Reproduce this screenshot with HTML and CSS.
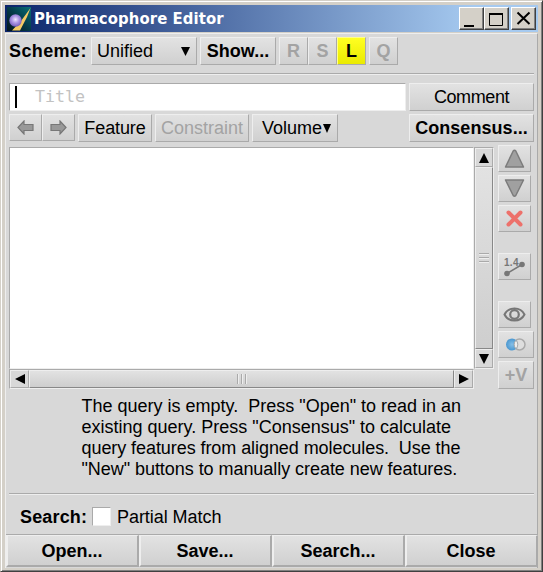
FILE: index.html
```html
<!DOCTYPE html>
<html lang="en">
<head>
<meta charset="utf-8">
<title>Pharmacophore Editor</title>
<link rel="stylesheet" href="styles.css">
</head>
<body>
<div class="window">
  <header class="titlebar">
    <svg class="logo" width="24" height="24" viewBox="0 0 24 24">
      <defs>
        <linearGradient id="tile" x1="0" y1="1" x2="1" y2="0"><stop offset="0" stop-color="#04141c"/><stop offset=".5" stop-color="#053a48"/><stop offset="1" stop-color="#087078"/></linearGradient>
        <radialGradient id="ball" cx=".5" cy=".42" r=".6"><stop offset="0" stop-color="#f0e8ff"/><stop offset=".45" stop-color="#b09ae6"/><stop offset="1" stop-color="#7058b8"/></radialGradient>
      </defs>
      <rect width="24" height="24" fill="url(#tile)"/>
      <path d="M23.500 1 20 10 13 23.500H5L14 14Z" fill="#f5ca65"/>
      <circle cx="8.500" cy="13.500" r="6.200" fill="url(#ball)"/>
    </svg>
    <h1 class="title">Pharmacophore Editor</h1>
    <div class="controls">
      <button class="control" aria-label="Minimize"><svg width="23" height="21"><path d="M4 17h10v2H4z"/></svg></button>
      <button class="control maximize" aria-label="Maximize"><svg width="23" height="21"><path d="M4.500 5.500h13v12h-13z" fill="none" stroke="#000"/><path d="M4 5h14v2H4z"/></svg></button>
      <button class="control" aria-label="Close window"><svg width="23" height="21"><path d="m5.500 4.500 12 11.500m0-11.500-12 11.500" stroke="#000" stroke-width="2"/></svg></button>
    </div>
  </header>
  <main class="client">
    <div class="scheme-row">
      <span class="label scheme-label">Scheme:</span>
      <button class="button select"><span>Unified</span><svg width="9" height="9"><path d="M0 0h9L4.500 9z"/></svg></button>
      <button class="button bold show">Show...</button>
      <div class="toggles"><button class="button bold muted">R</button><button class="button bold muted">S</button><button class="button bold active">L</button></div>
      <button class="button bold muted square">Q</button>
    </div>
    <hr class="rule top-rule">
    <div class="query-row title-row">
      <div class="title-input"><i class="caret"></i><span>Title</span></div>
      <button class="button wide comment">Comment</button>
    </div>
    <div class="query-row tool-row">
      <button class="button arrow" aria-label="Back"><svg width="17" height="15" viewBox="0 0 17 15"><path d="m1 7.500 6-6.500v3.500h9v6H7V14Z"/></svg></button>
      <button class="button arrow" aria-label="Forward"><svg width="17" height="15" viewBox="0 0 17 15"><path d="M16 7.500 10 1v3.500H1v6h9V14Z"/></svg></button>
      <button class="button feature">Feature</button>
      <button class="button muted constraint">Constraint</button>
      <button class="button volume"><span>Volume</span><svg width="8" height="9"><path d="M0 0h8L4 9z"/></svg></button>
      <button class="button bold wide consensus">Consensus...</button>
    </div>
    <section class="workspace">
      <div class="list-grid">
        <div class="list"></div>
        <div class="vbar"><button class="cap" aria-label="Scroll up"><svg width="10" height="10"><path d="m5 0 5 10H0z"/></svg></button><div class="thumb"><i class="grip"></i></div><button class="cap" aria-label="Scroll down"><svg width="10" height="10"><path d="M0 0h10L5 10z"/></svg></button></div>
        <div class="hbar"><button class="cap" aria-label="Scroll left"><svg width="10" height="10"><path d="M10 0v10L0 5z"/></svg></button><div class="thumb"><i class="grip"></i></div><button class="cap" aria-label="Scroll right"><svg width="10" height="10"><path d="m0 0 10 5-10 5z"/></svg></button></div>
      </div>
      <div class="side">
        <button class="button" aria-label="Move up"><svg width="31" height="25"><path d="M14.200 5q1.300-1.500 2.600 0L24.500 21H6.500Z" fill="#a0a0a0" stroke="#7c7c7c" stroke-width="1.500" stroke-linejoin="round"/></svg></button>
        <button class="button" aria-label="Move down"><svg width="31" height="25"><path d="M6.500 4h18l-7.700 15.500q-1.300 1.500-2.600 0Z" fill="#a0a0a0" stroke="#7c7c7c" stroke-width="1.500" stroke-linejoin="round"/></svg></button>
        <button class="button" aria-label="Delete"><svg width="31" height="25"><path d="m9.500 6.500 12 12m0-12-12 12" stroke="#ed716b" stroke-width="4" stroke-linecap="round"/></svg></button>
        <button class="button gap-before" aria-label="Measure distance"><svg width="31" height="25"><text class="measure" x="5" y="12">1.4</text><path d="m8 19.500 15-9" stroke="#777" stroke-width="1.500"/><circle cx="8" cy="19.500" r="2.800" fill="#777"/><circle cx="23" cy="10.500" r="2.800" fill="#777"/></svg></button>
        <button class="button gap-before" aria-label="Show features"><svg width="31" height="25" fill="none" stroke="#777"><path d="M5.500 12.500c4-8 16-8 20 0-4 8-16 8-20 0Z" stroke-width="2"/><circle cx="15.500" cy="12.500" r="4.300" stroke-width="2.200"/></svg></button>
        <button class="button larger" aria-label="Toggle overlap"><svg width="34" height="25"><defs><radialGradient id="blue"><stop stop-color="#86bfe7"/><stop offset="1" stop-color="#4a97d0"/></radialGradient></defs><circle cx="20.500" cy="12.500" r="5.500" fill="#dedede" stroke="#aaa" stroke-width="1.500"/><circle cx="13" cy="12.500" r="6" fill="url(#blue)"/><path d="M17 8.200a6 6 0 0 1 0 8.600 6 6 0 0 1 0-8.600Z" fill="#eee" stroke="#aaa"/></svg></button>
        <button class="button bold muted larger volume-add">+V</button>
      </div>
    </section>
    <p class="message"><span>The query is empty.&nbsp; Press "Open" to read in an</span><br><span>existing query. Press "Consensus" to calculate</span><br><span class="tight">query features from aligned molecules.&nbsp; Use the</span><br><span class="snug">"New" buttons to manually create new features.</span></p>
    <hr class="rule">
    <div class="search-row"><span class="label search-label">Search:</span><i class="checkbox"></i><span class="partial">Partial Match</span></div>
    <footer class="actions"><button>Open...</button><button>Save...</button><button>Search...</button><button>Close</button></footer>
  </main>
</div>
</body>
</html>
```
FILE: styles.css
```css
* { box-sizing: border-box; }
body { margin: 0; width: 543px; height: 572px; overflow: hidden; font: 18px/20px "Liberation Sans", Arial, sans-serif; color: #000; background: #d4d0c8; }
button { margin: 0; padding: 0; font: inherit; color: inherit; white-space: nowrap; }
svg { display: block; flex: none; }
.window { width: 543px; height: 572px; border: 1px solid #d4d0c8; border-right-color: #404040; border-bottom-color: #404040; box-shadow: inset 1px 1px #fff, inset -1px -1px #808080; padding: 4px; }
.titlebar { display: flex; align-items: center; width: 533px; height: 27px; padding: 0 2px; background: linear-gradient(90deg, #0a246a, #a6caf0 88%); }
.title { margin: 0 0 0 3px; color: #fff; font: bold 16.500px/20px "DejaVu Sans Condensed", "DejaVu Sans", sans-serif; letter-spacing: .1px; white-space: nowrap; }
.controls { display: flex; margin-left: auto; }
.control { width: 25px; height: 23px; border: 1px solid #fff; border-right-color: #404040; border-bottom-color: #404040; background: #d4d0c8; box-shadow: inset -1px -1px #808080; }
.maximize { margin-right: 2px; }
.client { width: 533px; height: 535px; margin-top: 1px; border: 1px solid #eee; border-right-color: #aaa; border-bottom: 0; background: #d8d8d8; }
.button { display: flex; flex: none; align-items: center; justify-content: center; height: 28px; border: 1px solid #eee; border-right-color: #aaa; border-bottom-color: #aaa; background: linear-gradient(#e2e2e2, #d0d0d0); }
.bold, .label { font-weight: bold; }
.muted { color: #a3a3a3; }
.scheme-row { display: flex; height: 39px; padding: 3px 3px 0; }
.scheme-label { width: 82px; padding-top: 4px; letter-spacing: .4px; }
.select { width: 106px; justify-content: space-between; padding: 0 6px 0 5px; margin-right: 3px; }
.show { width: 76px; margin-right: 3px; }
.toggles { display: flex; margin-right: 3px; }
.toggles .button, .square { width: 29px; }
.active { background: linear-gradient(#ffff22, #eaea00); border-color: #ffff88 #aaa #aaa #ffff88; }
.rule { height: 2px; margin: 0 3px; border: 0; border-top: 1px solid #aaa; border-bottom: 1px solid #eee; }
.query-row { display: flex; margin: 8px 3px 0; }
.title-input { display: flex; align-items: center; width: 397px; height: 28px; margin-right: 3px; border: 1px solid #aaa; border-right-color: #eee; border-bottom-color: #eee; background: #fff; color: #c2c2c2; font: 16.600px/20px "DejaVu Sans Mono", monospace; }
.caret { width: 2px; height: 22px; margin: 0 18px 0 5px; background: #000; }
.wide { width: 125px; }
.comment { letter-spacing: -.4px; }
.tool-row { margin-top: 3px; }
.arrow { width: 33px; height: 27px; }
.arrow path { fill: #999; stroke: #777; stroke-width: 1.2; }
.feature { width: 74px; margin: 0 3px; letter-spacing: -.1px; }
.constraint { width: 94px; margin-right: 3px; }
.volume { width: 86px; gap: 1px; padding-left: 3px; }
.volume svg { margin-top: 1px; }
.consensus { margin-left: auto; letter-spacing: .05px; }
.workspace { display: flex; height: 246px; margin-left: 3px; padding-top: 3px; }
.list-grid { display: grid; grid-template: 222px 20px / 465px 20px; width: 485px; height: 242px; margin-top: 2px; }
.list { border: 1px solid #aaa; border-right-color: #eee; border-bottom-color: #eee; background: #fff; }
.vbar, .hbar { display: flex; border: 1px solid #aaa; border-right-color: #eee; border-bottom-color: #eee; }
.vbar { flex-direction: column; }
.hbar { width: 465px; }
.cap { display: flex; flex: none; align-items: center; justify-content: center; width: 19px; height: 18px; border: 1px solid #eee; border-right-color: #aaa; border-bottom-color: #aaa; background: #d8d8d8; }
.vbar .cap { width: 18px; height: 19px; }
.thumb { display: flex; flex: 1; align-items: center; justify-content: center; border: 1px solid #eee; border-right-color: #888; border-bottom-color: #888; background: linear-gradient(#e2e2e2, #cecece); }
.grip { width: 10px; height: 10px; background: repeating-linear-gradient(90deg, #aaa 0 1px, #eee 1px 2px, transparent 2px 4px); }
.vbar .grip { background: repeating-linear-gradient(#aaa 0 1px, #eee 1px 2px, transparent 2px 4px); }
.side { display: flex; flex-direction: column; gap: 3px; margin-left: 4px; }
.side .button { width: 33px; height: 27px; }
.side .gap-before { margin-top: 18px; }
.side .larger { width: 36px; }
.side .volume-add { height: 28px; }
.measure { font: bold 10px "Liberation Sans", sans-serif; letter-spacing: .3px; fill: #777; }
.message { width: 430px; height: 84px; margin: 8px 0 13px 75.500px; line-height: 21px; white-space: nowrap; }
.tight { letter-spacing: -.07px; }
.snug { letter-spacing: -.05px; }
.search-row { display: flex; height: 39px; padding: 12px 0 0 14px; }
.label { white-space: nowrap; }
.search-label { width: 72px; letter-spacing: .15px; }
.checkbox { width: 19px; height: 19px; margin-right: 6px; border: 1px solid #aaa; border-right-color: #eee; border-bottom-color: #eee; background: #fff; }
.partial { letter-spacing: -.05px; }
.actions { display: grid; grid-template-columns: repeat(4, 133px); width: 532px; height: 33px; border-top: 1px solid #aaa; }
.actions button { height: 32px; padding-right: 1px; font-weight: bold; border: 2px solid #eee; border-width: 1px 2px 2px; border-color: #eee #aaa #aaa #eee; background: linear-gradient(#e2e2e2, #d0d0d0); }
```
